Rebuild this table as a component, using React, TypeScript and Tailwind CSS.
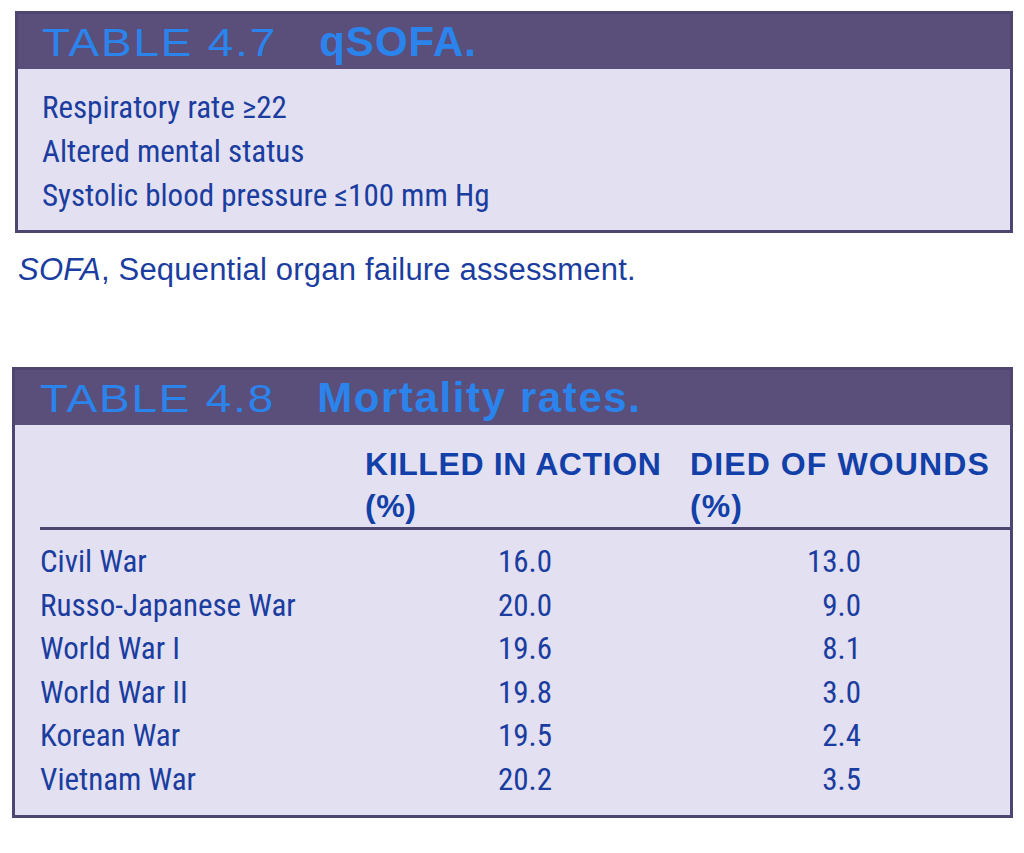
const criteria = [
  "Respiratory rate ≥22",
  "Altered mental status",
  "Systolic blood pressure ≤100 mm Hg",
];

const rates = [
  { war: "Civil War", kia: "16.0", dow: "13.0" },
  { war: "Russo-Japanese War", kia: "20.0", dow: "9.0" },
  { war: "World War I", kia: "19.6", dow: "8.1" },
  { war: "World War II", kia: "19.8", dow: "3.0" },
  { war: "Korean War", kia: "19.5", dow: "2.4" },
  { war: "Vietnam War", kia: "20.2", dow: "3.5" },
];

function TableHeader({ number, title, wide }: { number: string; title: string; wide?: boolean }) {
  return (
    <div className="h-[55px] bg-[#5a4f7b] pt-[7px] leading-none text-[#2b83ec] font-['Liberation_Sans',Arial,sans-serif] whitespace-nowrap">
      {/* the book uses an extended face here */}
      <span className="inline-block origin-left scale-x-[1.18] text-[39px] tracking-[1.5px]">{number}</span>
      <span className={`ml-[78px] text-[42px] font-bold ${wide ? "tracking-[1.6px]" : "tracking-[1px]"}`}>
        {title}
      </span>
    </div>
  );
}

export default function App() {
  return (
    <div className="min-h-screen bg-white pt-[11px] text-[#1b3d9f]">
      {/* Table 4.7 */}
      <div className="ml-[15px] w-[998px] border-[3px] border-[#4e4570]">
        <div className="pl-[24px] bg-[#5a4f7b]">
          <TableHeader number="TABLE 4.7" title="qSOFA." />
        </div>
        <div className="bg-[#e2e0f1] pt-[17px] pb-[12px] pl-[24px] font-['Roboto_Condensed',sans-serif] text-[31px] leading-[44px]">
          {criteria.map((c) => (
            <div key={c}>{c}</div>
          ))}
        </div>
      </div>

      <p className="mt-[20px] ml-[18px] text-[31px] leading-[34px] tracking-[0.2px] font-['Liberation_Sans',Arial,sans-serif]">
        <i>SOFA</i>, Sequential organ failure assessment.
      </p>

      {/* Table 4.8 */}
      <div className="mt-[80px] ml-[12px] w-[1001px] border-[3px] border-[#4e4570]">
        <div className="pl-[25px] bg-[#5a4f7b]">
          <TableHeader number="TABLE 4.8" title="Mortality rates." wide />
        </div>
        <div className="bg-[#e2e0f1] pt-[18px] pb-[13px] pl-[25px]">
          <div className="grid grid-cols-[325px_325px_1fr] border-b-[3px] border-[#4e4570] font-['Liberation_Sans',Arial,sans-serif] text-[32px] font-bold leading-[42px] text-[#1240a8]">
            <div />
            <div className="tracking-[0.6px]">
              KILLED IN ACTION
              <br />
              (%)
            </div>
            <div className="tracking-[1.1px]">
              DIED OF WOUNDS
              <br />
              (%)
            </div>
          </div>
          <div className="pt-[10px] font-['Roboto_Condensed',sans-serif] text-[31px] leading-[43.6px]">
            {rates.map((r) => (
              <div key={r.war} className="grid grid-cols-[325px_325px_1fr]">
                <div>{r.war}</div>
                <div className="text-right pr-[138px]">{r.kia}</div>
                <div className="text-right pr-[149px]">{r.dow}</div>
              </div>
            ))}
          </div>
        </div>
      </div>
    </div>
  );
}
